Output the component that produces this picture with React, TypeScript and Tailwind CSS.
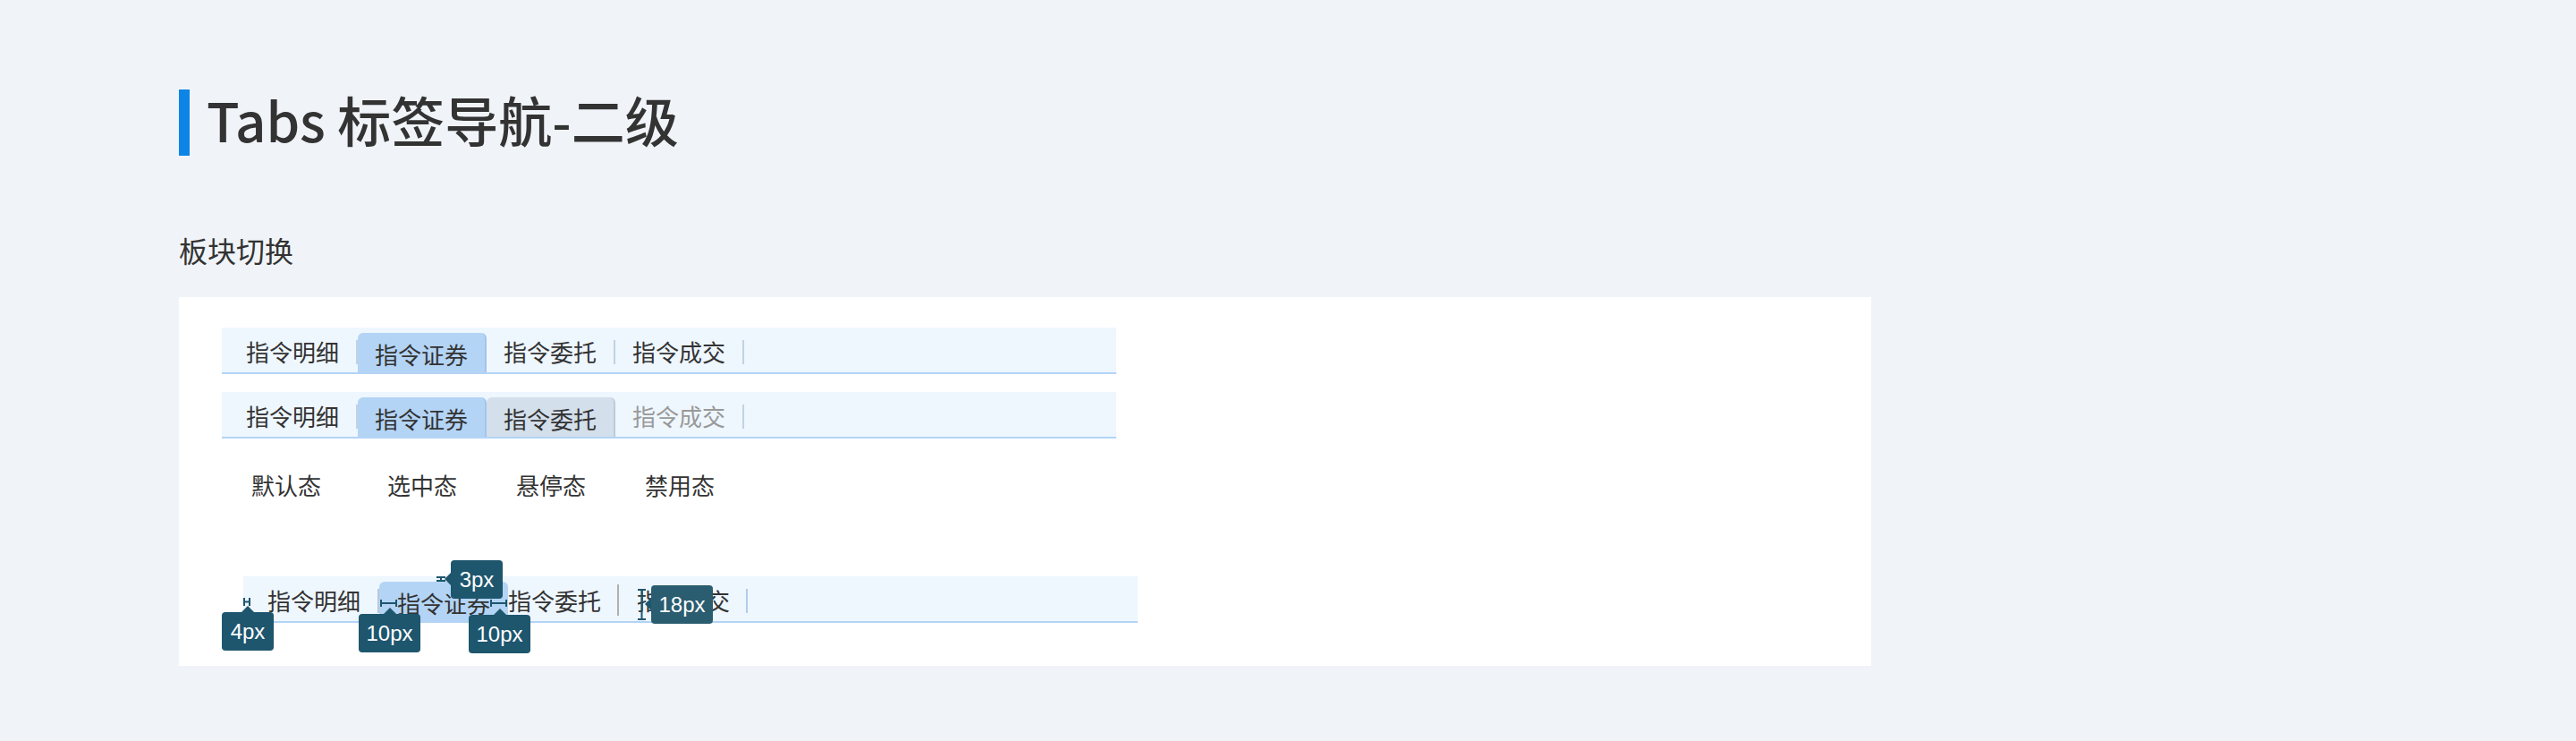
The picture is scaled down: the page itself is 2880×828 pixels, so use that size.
import type { ReactNode } from "react";

type TabState = "default" | "active" | "hover" | "disabled";

const labels = ["指令明细", "指令证券", "指令委托", "指令成交"];

function Separator({ className = "bg-[#c2d2e2]" }: { className?: string }) {
  return <span className={`mt-[5px] h-[27px] w-[2px] shrink-0 ${className}`} />;
}

/** One tab of the secondary tab strip: 144px wide, short divider on its right. */
function Tab({ label, state }: { label: string; state: TabState }) {
  if (state === "active" || state === "hover") {
    return (
      <div
        className={
          state === "active"
            ? "flex h-[44px] w-[144px] items-center justify-center rounded-t-[6px] border-r-2 border-[#a3c5ea] bg-[#b3d4f5] pt-[3px] text-[#333]"
            : "flex h-[44px] w-[144px] items-center justify-center rounded-t-[6px] border-r-2 border-[#bccbdb] bg-[#d3dfeb] pt-[3px] text-[#333]"
        }
      >
        {label}
      </div>
    );
  }
  return (
    <div className="flex h-[50px] w-[144px] items-center">
      <span
        className={`flex-1 pt-[3px] text-center ${state === "disabled" ? "text-[#999]" : "text-[#333]"}`}
      >
        {label}
      </span>
      <Separator />
    </div>
  );
}

function TabBar({ states }: { states: TabState[] }) {
  return (
    <div className="flex h-[52px] w-[1000px] items-end border-b-2 border-[#b3d4f5] bg-[#eef6fe] pl-[8px] text-[26px] leading-[36px]">
      {labels.map((label, i) => (
        <Tab key={label} label={label} state={states[i]} />
      ))}
    </div>
  );
}

function HBeam({ w, h }: { w: number; h: number }) {
  return (
    <svg width={w} height={h} viewBox={`0 0 ${w} ${h}`} className="block">
      <path d={`M1 0V${h}M${w - 1} 0V${h}M1 ${h / 2}H${w - 1}`} stroke="#1e566e" strokeWidth="2" fill="none" />
    </svg>
  );
}

function VBeam({ w, h }: { w: number; h: number }) {
  return (
    <svg width={w} height={h} viewBox={`0 0 ${w} ${h}`} className="block">
      <path d={`M0 1H${w}M0 ${h - 1}H${w}M${w / 2} 1V${h - 1}`} stroke="#1e566e" strokeWidth="2" fill="none" />
    </svg>
  );
}

/** Dark measurement tag with a small pointer, as dropped by the spec tool. */
function Tag({
  children,
  pointer,
  className,
}: {
  children: ReactNode;
  pointer: "up" | "left";
  className: string;
}) {
  return (
    <div
      className={`absolute flex h-[43px] items-center justify-center rounded-[4px] bg-[#1e566e] font-['Liberation_Sans',Arial,sans-serif] text-[24px] leading-none text-white ${className}`}
    >
      {pointer === "up" ? (
        <span className="absolute -top-[7px] left-1/2 -ml-[7px] h-0 w-0 border-x-[7px] border-b-[7px] border-x-transparent border-b-[#1e566e]" />
      ) : (
        <span className="absolute top-[14px] -left-[7px] h-0 w-0 border-y-[7px] border-r-[7px] border-y-transparent border-r-[#1e566e]" />
      )}
      {children}
    </div>
  );
}

/** The annotated strip: same tabs, with spacing callouts laid over it. */
function SpecBar() {
  return (
    <div className="relative ml-[24px] mt-[84px] flex h-[52px] w-[1000px] items-end border-b-2 border-[#b3d4f5] bg-[#eef6fe] pl-[8px] text-[26px] leading-[36px] text-[#333]">
      <div className="flex h-[50px] w-[144px] items-center">
        <span className="flex-1 pt-[3px] text-center">指令明细</span>
        <Separator className="bg-[#b9c8d8]" />
      </div>
      <div className="flex h-[44px] w-[144px] items-center rounded-t-[6px] bg-[#b3d4f5] pt-[3px] pl-[20px]">
        指令证券
      </div>
      <div className="flex h-[50px] items-center">
        <span className="pt-[3px] pr-[18px]">指令委托</span>
        <span className="mt-[3px] h-[35px] w-[2px] bg-[#b0b0b0]" />
      </div>
      <div className="flex h-[50px] items-center">
        <span className="pt-[3px] pr-[18px] pl-[20px]">指令成交</span>
        <Separator className="bg-[#b3cde8]" />
      </div>

      <div className="absolute top-[24px] left-0">
        <HBeam w={8} h={9} />
      </div>
      <Tag pointer="up" className="top-[40px] -left-[24px] w-[58px]">
        4px
      </Tag>

      <div className="absolute top-[26px] left-[153px]">
        <HBeam w={19} h={8} />
      </div>
      <Tag pointer="up" className="top-[42px] left-[129px] w-[69px]">
        10px
      </Tag>

      <div className="absolute top-0 left-[216px]">
        <VBeam w={10} h={6} />
      </div>
      <Tag pointer="left" className="-top-[18px] left-[232px] w-[58px]">
        3px
      </Tag>

      <div className="absolute top-[26px] left-[276px]">
        <HBeam w={19} h={8} />
      </div>
      <Tag pointer="up" className="top-[43px] left-[252px] w-[69px]">
        10px
      </Tag>

      <div className="absolute top-[14px] left-[441px]">
        <VBeam w={9} h={35} />
      </div>
      <Tag pointer="left" className="top-[10px] left-[456px] w-[69px] bg-[#2b5d70]">
        18px
      </Tag>
    </div>
  );
}

export default function App() {
  return (
    <div className="min-h-[828px] bg-[#f0f4f8] pt-[100px] pl-[200px] font-['Noto_Sans_CJK_SC','Noto_Sans',sans-serif] text-[#333]">
      <div className="flex items-center">
        <span className="h-[74px] w-[12px] bg-[#0c85e6]" />
        <h1 className="mb-[8px] ml-[19px] text-[60px] leading-[66px] font-medium">Tabs 标签导航-二级</h1>
      </div>

      <h2 className="mt-[89px] text-[32px] leading-[32px]">板块切换</h2>

      <div className="mt-[37px] w-[1892px] bg-white pt-[34px] pb-[48px] pl-[48px]">
        <TabBar states={["default", "active", "default", "default"]} />
        <div className="mt-[20px]">
          <TabBar states={["default", "active", "hover", "disabled"]} />
        </div>

        <div className="mt-[34px] flex pl-[8px] text-[26px] leading-[36px] text-[#333]">
          <span className="w-[144px] pr-[16px] text-center">默认态</span>
          <span className="w-[144px] text-center">选中态</span>
          <span className="w-[144px] text-center">悬停态</span>
          <span className="w-[144px] text-center">禁用态</span>
        </div>

        <SpecBar />
      </div>
    </div>
  );
}
